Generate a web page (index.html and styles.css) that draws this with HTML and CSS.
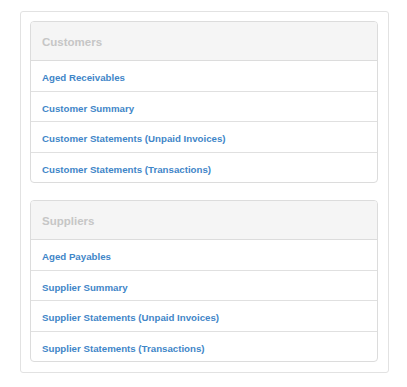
FILE: index.html
```html
<!DOCTYPE html>
<html lang="en">

<head>
    <meta charset="UTF-8">
    <meta name="viewport" content="width=device-width, initial-scale=1.0">
    <title>Reports</title>
    <link rel="stylesheet" href="styles.css">
</head>

<body>
    <div class="reports">
        <section class="panel">
            <h3 class="panel-heading">Customers</h3>
            <ul class="report-list">
                <li><a href="#">Aged Receivables</a></li>
                <li><a href="#">Customer Summary</a></li>
                <li><a href="#">Customer Statements (Unpaid Invoices)</a></li>
                <li><a href="#">Customer Statements (Transactions)</a></li>
            </ul>
        </section>
        <section class="panel">
            <h3 class="panel-heading">Suppliers</h3>
            <ul class="report-list">
                <li><a href="#">Aged Payables</a></li>
                <li><a href="#">Supplier Summary</a></li>
                <li><a href="#">Supplier Statements (Unpaid Invoices)</a></li>
                <li><a href="#">Supplier Statements (Transactions)</a></li>
            </ul>
        </section>
    </div>
</body>

</html>
```

FILE: styles.css
```css
body {
    background: #fff;
    color: #333;
    font-family: "Liberation Sans", Arial, sans-serif;
    margin: 0;
    padding: 11px 19px 0 20px;
}

.reports {
    border: 1px solid #e2e2e2;
    border-radius: 3px;
    display: flex;
    flex-direction: column;
    gap: 17px;
    padding: 9px 10px 10px 9px;
    width: 348px;
}

.panel {
    border: 1px solid #dcdcdc;
    border-radius: 4px;
    overflow: hidden;
}

.panel-heading {
    background: #f5f5f5;
    border-bottom: 1px solid #dcdcdc;
    color: #c6c6c6;
    font-size: 11.5px;
    font-weight: bold;
    height: 38px;
    line-height: 40px;
    margin: 0;
    padding: 0 11px;
}

.report-list {
    list-style: none;
    margin: 0;
    padding: 0;
}

.report-list li {
    border-top: 1px solid #e0e0e0;
    height: 29.5px;
    line-height: 30px;
    padding: 0 11px;
}

.report-list li:first-child {
    border-top: 0;
}

.report-list a {
    color: #3f86c8;
    font-size: 9.7px;
    font-weight: bold;
    text-decoration: none;
}
```
